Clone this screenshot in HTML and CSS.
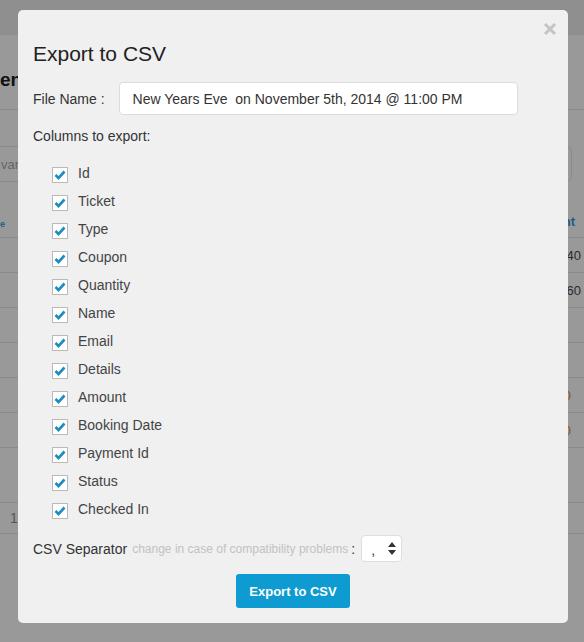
FILE: index.html
```html
<!DOCTYPE html>
<html>
<head>
<meta charset="utf-8">
<title>Export to CSV</title>
<link rel="stylesheet" href="styles.css">
</head>
<body>
<div class="page">
  <div class="topbar"></div>
  <div class="heading"><span class="heading-text">en</span></div>
  <div class="filter"><span class="filter-text">var</span></div>
  <div class="table">
    <div class="row row-head"><span class="cell-left link">e</span><span class="cell-right link">Amount</span></div>
    <div class="row"><span class="cell-left"></span><span class="cell-right">40</span></div>
    <div class="row"><span class="cell-left"></span><span class="cell-right">60</span></div>
    <div class="row"><span class="cell-left"></span><span class="cell-right"></span></div>
    <div class="row"><span class="cell-left"></span><span class="cell-right"></span></div>
    <div class="row"><span class="cell-left"></span><span class="cell-right orange short">0</span></div>
    <div class="row"><span class="cell-left"></span><span class="cell-right orange short">0</span></div>
    <div class="row row-band"></div>
    <div class="row row-small"><span class="cell-left num">1</span></div>
  </div>
</div>

<div class="modal">
  <button class="close" aria-label="Close">
    <svg width="14" height="14" viewBox="0 0 14 14"><path d="M2 2 L12 12 M12 2 L2 12" stroke="#c4c4c4" stroke-width="3" stroke-linecap="butt" fill="none"/></svg>
  </button>
  <h1 class="title">Export to CSV</h1>
  <div class="file-row">
    <label class="label">File Name :</label>
    <input class="file-input" type="text" value="New Years Eve  on November 5th, 2014 @ 11:00 PM">
  </div>
  <div class="label cols-label">Columns to export:</div>
  <ul class="cols">
    <li class="col"><span class="cb"><svg width="12" height="10" viewBox="0 0 12 10"><path d="M1.5 5 L4.5 8 L10.5 1.5" stroke="#1e8cbe" stroke-width="2.6" fill="none"/></svg></span><span class="col-name">Id</span></li>
    <li class="col"><span class="cb"><svg width="12" height="10" viewBox="0 0 12 10"><path d="M1.5 5 L4.5 8 L10.5 1.5" stroke="#1e8cbe" stroke-width="2.6" fill="none"/></svg></span><span class="col-name">Ticket</span></li>
    <li class="col"><span class="cb"><svg width="12" height="10" viewBox="0 0 12 10"><path d="M1.5 5 L4.5 8 L10.5 1.5" stroke="#1e8cbe" stroke-width="2.6" fill="none"/></svg></span><span class="col-name">Type</span></li>
    <li class="col"><span class="cb"><svg width="12" height="10" viewBox="0 0 12 10"><path d="M1.5 5 L4.5 8 L10.5 1.5" stroke="#1e8cbe" stroke-width="2.6" fill="none"/></svg></span><span class="col-name">Coupon</span></li>
    <li class="col"><span class="cb"><svg width="12" height="10" viewBox="0 0 12 10"><path d="M1.5 5 L4.5 8 L10.5 1.5" stroke="#1e8cbe" stroke-width="2.6" fill="none"/></svg></span><span class="col-name">Quantity</span></li>
    <li class="col"><span class="cb"><svg width="12" height="10" viewBox="0 0 12 10"><path d="M1.5 5 L4.5 8 L10.5 1.5" stroke="#1e8cbe" stroke-width="2.6" fill="none"/></svg></span><span class="col-name">Name</span></li>
    <li class="col"><span class="cb"><svg width="12" height="10" viewBox="0 0 12 10"><path d="M1.5 5 L4.5 8 L10.5 1.5" stroke="#1e8cbe" stroke-width="2.6" fill="none"/></svg></span><span class="col-name">Email</span></li>
    <li class="col"><span class="cb"><svg width="12" height="10" viewBox="0 0 12 10"><path d="M1.5 5 L4.5 8 L10.5 1.5" stroke="#1e8cbe" stroke-width="2.6" fill="none"/></svg></span><span class="col-name">Details</span></li>
    <li class="col"><span class="cb"><svg width="12" height="10" viewBox="0 0 12 10"><path d="M1.5 5 L4.5 8 L10.5 1.5" stroke="#1e8cbe" stroke-width="2.6" fill="none"/></svg></span><span class="col-name">Amount</span></li>
    <li class="col"><span class="cb"><svg width="12" height="10" viewBox="0 0 12 10"><path d="M1.5 5 L4.5 8 L10.5 1.5" stroke="#1e8cbe" stroke-width="2.6" fill="none"/></svg></span><span class="col-name">Booking Date</span></li>
    <li class="col"><span class="cb"><svg width="12" height="10" viewBox="0 0 12 10"><path d="M1.5 5 L4.5 8 L10.5 1.5" stroke="#1e8cbe" stroke-width="2.6" fill="none"/></svg></span><span class="col-name">Payment Id</span></li>
    <li class="col"><span class="cb"><svg width="12" height="10" viewBox="0 0 12 10"><path d="M1.5 5 L4.5 8 L10.5 1.5" stroke="#1e8cbe" stroke-width="2.6" fill="none"/></svg></span><span class="col-name">Status</span></li>
    <li class="col"><span class="cb"><svg width="12" height="10" viewBox="0 0 12 10"><path d="M1.5 5 L4.5 8 L10.5 1.5" stroke="#1e8cbe" stroke-width="2.6" fill="none"/></svg></span><span class="col-name">Checked In</span></li>
  </ul>
  <div class="sep-row">
    <span class="label">CSV Separator</span>
    <span class="hint">change in case of compatibility problems</span>
    <span class="label colon">:</span>
    <span class="select"><span class="select-val">,</span>
      <svg class="arrows" width="8" height="13" viewBox="0 0 8 13"><path d="M4 0 L8 5 L0 5 Z M0 8 L8 8 L4 13 Z" fill="#333"/></svg>
    </span>
  </div>
  <div class="btn-row">
    <button class="btn">Export to CSV</button>
  </div>
</div>
</body>
</html>
```

FILE: styles.css
```css
* { box-sizing: border-box; }
html, body { margin: 0; padding: 0; }
body {
  width: 584px;
  height: 642px;
  overflow: hidden;
  background: #999999;
  font-family: "Liberation Sans", Arial, sans-serif;
  position: relative;
}

/* background page (dimmed) */
.page { width: 584px; }
.topbar { height: 35px; background: #8f8f8f; }
.heading {
  height: 75px;
  border-bottom: 1px solid #8a8a8a;
  display: flex;
  align-items: flex-end;
  padding-bottom: 18px;
  overflow: hidden;
}
.heading-text {
  margin-left: 0;
  font-size: 19px;
  font-weight: bold;
  color: #111;
}
.filter {
  margin-top: 36px;
  margin-left: -10px;
  margin-right: 12px;
  height: 36px;
  border: 1px solid #8a8a8a;
  border-radius: 5px;
  display: flex;
  align-items: center;
  overflow: hidden;
}
.filter-text { margin-left: 10px; font-size: 13px; color: #666; }
.table { width: 584px; }
.row {
  height: 35px;
  border-bottom: 1px solid #8a8a8a;
  display: flex;
  align-items: center;
  justify-content: space-between;
  font-size: 13px;
  color: #2a2a2a;
}
.row-head { height: 56px; align-items: flex-end; padding-bottom: 8px; font-weight: bold; }
.row-band { height: 55px; }
.row-small { height: 31px; }
.cell-left { margin-left: 0; }
.row-head .cell-left { font-size: 9px; }
.cell-right { padding-right: 3px; }
.row-head .cell-right { padding-right: 9px; }
.link { color: #1f5c80; }
.orange { color: #8a5410; }
.short { padding-right: 13px; }
.num { margin-left: 10px; color: #555; font-size: 14px; }

/* modal */
.modal {
  position: absolute;
  left: 18px;
  top: 10px;
  width: 550px;
  height: 613px;
  background: #f0f0f0;
  border-radius: 5px;
  padding: 30px 15px 15px 15px;
}
.close {
  position: absolute;
  right: 11px;
  top: 12px;
  width: 14px;
  height: 14px;
  padding: 0;
  border: 0;
  background: none;
  display: block;
}
.close svg { display: block; }
.title {
  margin: 0;
  height: 28px;
  line-height: 28px;
  font-size: 21px;
  font-weight: normal;
  color: #222;
}
.label { font-size: 14px; color: #333; }
.file-row {
  margin-top: 14px;
  display: flex;
  align-items: center;
  gap: 14px;
  height: 33px;
}
.file-input {
  width: 399px;
  height: 33px;
  border: 1px solid #dcdcdc;
  border-radius: 4px;
  background: #fff;
  padding: 0 13px;
  font-family: "Liberation Sans", Arial, sans-serif;
  font-size: 14px;
  color: #333;
  outline: none;
  white-space: pre;
}
.cols-label { margin-top: 11px; line-height: 20px; height: 20px; }
.cols {
  list-style: none;
  margin: 13px 0 0 0;
  padding: 0 0 0 19px;
}
.col {
  height: 28px;
  display: flex;
  align-items: center;
  font-size: 14px;
  color: #444;
}
.col-name { line-height: 28px; }
.cb {
  width: 16px;
  height: 16px;
  margin-top: 3px;
  margin-right: 10px;
  border: 1px solid #b9b9b9;
  background: #fff;
  display: flex;
  align-items: center;
  justify-content: center;
}
.cb svg { display: block; }
.sep-row {
  margin-top: 12px;
  height: 27px;
  display: flex;
  align-items: center;
}
.hint { font-size: 12px; color: #c2c2c2; margin-left: 5px; }
.colon { margin-left: 3px; margin-right: 6px; }
.select {
  width: 41px;
  height: 27px;
  border: 1px solid #dedede;
  border-radius: 4px;
  background: #fff;
  display: flex;
  align-items: center;
  justify-content: space-between;
  padding: 0 5px 0 9px;
}
.select-val { font-size: 14px; color: #333; margin-top: 2px; }
.arrows { display: block; }
.btn-row {
  margin-top: 12px;
  display: flex;
  justify-content: center;
}
.btn {
  width: 114px;
  height: 34px;
  border: 0;
  border-radius: 3px;
  background: #0e9bd1;
  color: #fff;
  font-family: "Liberation Sans", Arial, sans-serif;
  font-size: 13px;
  font-weight: bold;
  padding: 0;
}
```
